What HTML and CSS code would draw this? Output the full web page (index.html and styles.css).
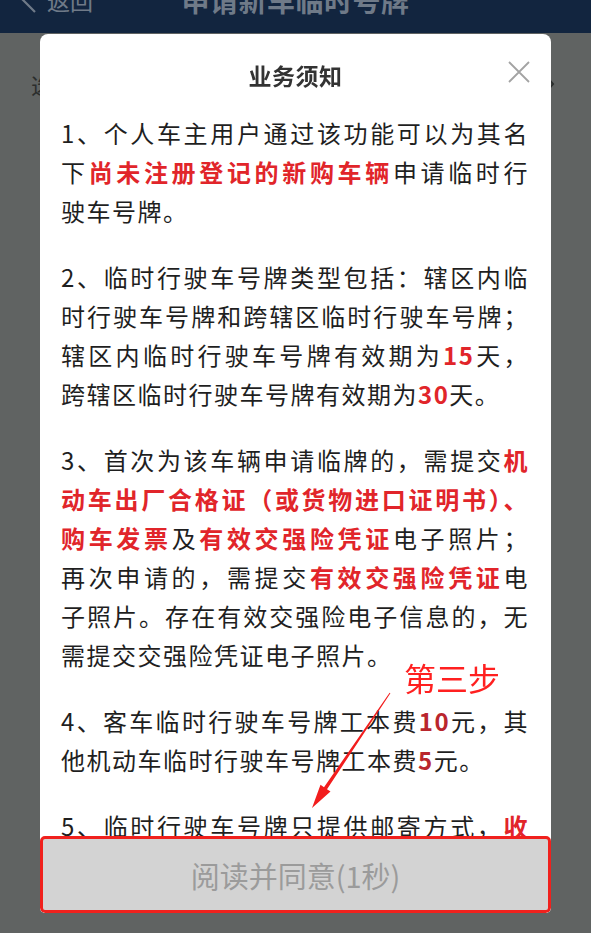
FILE: index.html
```html
<!DOCTYPE html>
<html lang="zh-CN">
<head>
<meta charset="utf-8">
<title>申请新车临时号牌</title>
<link rel="stylesheet" href="styles.css">
</head>
<body>
<div class="page">
  <header class="topbar">
    <div class="back">
      <svg class="back-icon" viewBox="0 0 16 26" width="16" height="26"><polyline points="14,1 2,13 14,25" fill="none" stroke="#6f7a88" stroke-width="2.2"/></svg>
      <span>返回</span>
    </div>
    <div class="bar-title">申请新车临时号牌</div>
    <div></div>
  </header>
  <div class="row">
    <span class="row-label">选择车辆</span>
    <svg class="row-arrow" viewBox="0 0 10 16" width="10" height="16"><polyline points="2,1 8,8 2,15" fill="none" stroke="#2b2e2d" stroke-width="2"/></svg>
  </div>
</div>

<div class="mask">
  <div class="dialog">
    <div class="dlg-head">
      <h2 class="dlg-title">业务须知</h2>
      <span class="close">
        <svg viewBox="0 0 24 24" width="24" height="24"><path d="M2 2 L22 22 M22 2 L2 22" stroke="#a3a3a3" stroke-width="1.8" fill="none"/></svg>
      </span>
    </div>
    <div class="dlg-body">
      <p class="notice">
        <span class="ln j">1、个人车主用户通过该功能可以为其名</span>
        <span class="ln j">下<b class="em">尚未注册登记的新购车辆</b>申请临时行</span>
        <span class="ln">驶车号牌。</span>
      </p>
      <p class="notice">
        <span class="ln j">2、临时行驶车号牌类型包括：辖区内临</span>
        <span class="ln j">时行驶车号牌和跨辖区临时行驶车号牌；</span>
        <span class="ln j">辖区内临时行驶车号牌有效期为<b class="em">15</b>天，</span>
        <span class="ln">跨辖区临时行驶车号牌有效期为<b class="em">30</b>天。</span>
      </p>
      <p class="notice">
        <span class="ln j">3、首次为该车辆申请临牌的，需提交<b class="em">机</b></span>
        <span class="ln j"><b class="em">动车出厂合格证（或货物进口证明书）、</b></span>
        <span class="ln j"><b class="em">购车发票</b>及<b class="em">有效交强险凭证</b>电子照片；</span>
        <span class="ln j">再次申请的，需提交<b class="em">有效交强险凭证</b>电</span>
        <span class="ln j">子照片。存在有效交强险电子信息的，无</span>
        <span class="ln">需提交交强险凭证电子照片。</span>
      </p>
      <p class="notice">
        <span class="ln j">4、客车临时行驶车号牌工本费<b class="em dark">10</b>元，其</span>
        <span class="ln">他机动车临时行驶车号牌工本费<b class="em dark">5</b>元。</span>
      </p>
      <p class="notice">
        <span class="ln j">5、临时行驶车号牌只提供邮寄方式，<b class="em">收</b></span>
      </p>
    </div>
    <button class="agree">阅读并同意(1秒)</button>
  </div>
</div>

<div class="annot">第三步</div>
<svg class="arrow" viewBox="0 0 92 125" width="92" height="125">
  <polygon points="84.6,4.7 85.4,5.3 22,101.2 25.5,103.6 7,120 15.5,96.8 19,99.2" fill="#f21d1d"/>
</svg>
</body>
</html>
```

FILE: styles.css
```css
* { box-sizing: border-box; }

html, body {
  margin: 0;
  padding: 0;
}

body {
  width: 591px;
  height: 933px;
  overflow: hidden;
  background: #606362;
  font-family: "Noto Sans CJK SC", "Noto Sans", sans-serif;
}

.page {
  display: flex;
  flex-direction: column;
}

.topbar {
  height: 33px;
  background: #12253f;
  overflow: hidden;
  display: grid;
  grid-template-columns: 1fr auto 1fr;
  align-items: start;
  color: #6f7a88;
}

.back {
  display: flex;
  align-items: center;
  gap: 10px;
  padding-left: 21px;
  margin-top: -13px;
  height: 26px;
  font-size: 23px;
  line-height: 26px;
}

.back-icon {
  flex-shrink: 0;
}

.bar-title {
  margin-top: -15px;
  font-size: 28px;
  line-height: 30px;
  font-weight: 700;
  letter-spacing: 0.5px;
}

.row {
  height: 102px;
  display: flex;
  align-items: center;
  justify-content: space-between;
  padding: 0 36px 0 31px;
}

.row-label {
  font-size: 22px;
  color: #2b2e2d;
}

.mask {
  position: fixed;
  inset: 0;
  padding: 34px 40px 20px;
  display: flex;
  flex-direction: column;
}

.dialog {
  flex: 1;
  background: #ffffff;
  border-radius: 8px 8px 5px 5px;
  display: flex;
  flex-direction: column;
  overflow: hidden;
}

.dlg-head {
  position: relative;
  padding-top: 26px;
  text-align: center;
  flex-shrink: 0;
}

.dlg-title {
  margin: 0;
  font-size: 23px;
  line-height: 30px;
  font-weight: 700;
  color: #333333;
  letter-spacing: 0.5px;
}

.close {
  position: absolute;
  right: 20px;
  top: 26px;
  width: 24px;
  height: 24px;
  display: block;
}

.close svg {
  display: block;
}

.dlg-body {
  flex: 1;
  overflow: hidden;
  padding: 23px 22px 0 21px;
  font-size: 24px;
  line-height: 39px;
  letter-spacing: 1.5px;
  color: #1f1f1f;
}

.notice {
  margin: 0 0 27px;
  text-align: justify;
}

.ln {
  display: block;
}

.j {
  text-align: justify;
  text-align-last: justify;
}

.em {
  color: #e1252a;
  font-weight: 700;
}

.em.dark {
  color: #b9262d;
}

.agree {
  flex-shrink: 0;
  height: 77px;
  margin: 0;
  background: #d3d3d3;
  border: 3px solid #f0211d;
  border-radius: 5px;
  font-family: "Noto Sans CJK SC", "Noto Sans", sans-serif;
  font-size: 29px;
  color: #9b9b9b;
  padding: 0;
}

.annot {
  position: absolute;
  left: 404px;
  top: 659px;
  font-size: 32px;
  line-height: 36px;
  color: #ff2020;
}

.arrow {
  position: absolute;
  left: 305px;
  top: 688px;
}
```
